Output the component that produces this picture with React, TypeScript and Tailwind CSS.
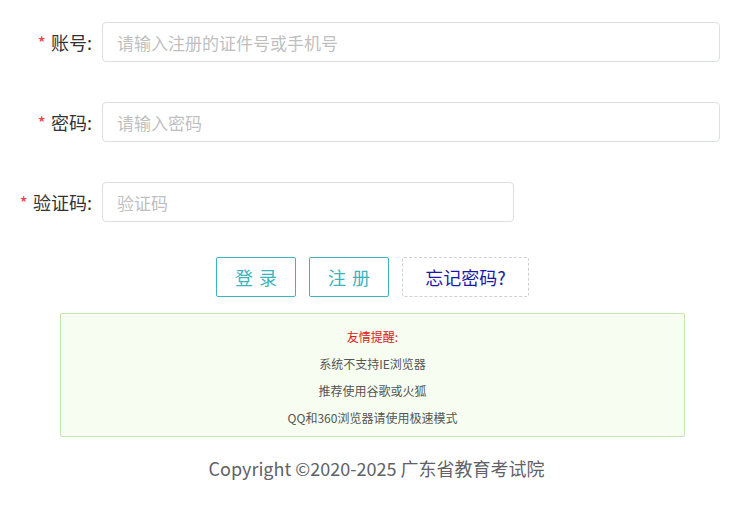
import React from "react";

const font = { fontFamily: '"Noto Sans CJK SC", "Noto Sans", sans-serif' };

function Row({ label, placeholder, wide = true }: { label: string; placeholder: string; wide?: boolean }) {
  return (
    <div className="flex items-center h-10">
      <label className="w-[94px] pr-[2px] text-right text-[18px] text-[#333] shrink-0">
        <span className="text-[#e8404a] text-[18px] mr-[5px]">*</span>
        {label}:
      </label>
      <input
        placeholder={placeholder}
        className={`ml-[8px] h-10 rounded-[4px] border border-[#dcdfe6] bg-white px-[14px] text-[17px] text-[#606266] placeholder:text-[#bfbfbf] outline-none ${wide ? "w-[618px]" : "w-[412px]"}`}
      />
    </div>
  );
}

export default function App() {
  return (
    <div className="w-[753px] h-[508px] bg-white pt-[22px]" style={font}>
      <div className="flex flex-col gap-10">
        <Row label="账号" placeholder="请输入注册的证件号或手机号" />
        <Row label="密码" placeholder="请输入密码" />
        <Row label="验证码" placeholder="验证码" wide={false} />
      </div>

      <div className="flex justify-center gap-[13px] mt-[35px] pr-[8px]">
        <button className="w-20 h-10 rounded-[2px] border border-[#3bb4bd] text-[#3bb4bd] text-[18px] tracking-[6px] pl-[6px]">
          登录
        </button>
        <button className="w-20 h-10 rounded-[2px] border border-[#3bb4bd] text-[#3bb4bd] text-[18px] tracking-[6px] pl-[6px]">
          注册
        </button>
        <button className="w-[127px] h-10 rounded-[2px] border border-dashed border-[#d0d0d0] text-[#1a1aa6] text-[18px]">
          忘记密码?
        </button>
      </div>

      <div className="mx-[60px] mt-4 w-[625px] h-[124px] border border-[#c2e7b0] bg-[#f7fdf0] rounded-[2px] flex flex-col items-center pt-[14px] gap-[10px] text-[12px] leading-[17px] text-[#555]">
        <p className="text-[#d9201b]">友情提醒:</p>
        <p>系统不支持IE浏览器</p>
        <p>推荐使用谷歌或火狐</p>
        <p>QQ和360浏览器请使用极速模式</p>
      </div>

      <p className="mt-[18px] text-center text-[18px] text-[#606266]">
        Copyright ©2020-2025 广东省教育考试院
      </p>
    </div>
  );
}
